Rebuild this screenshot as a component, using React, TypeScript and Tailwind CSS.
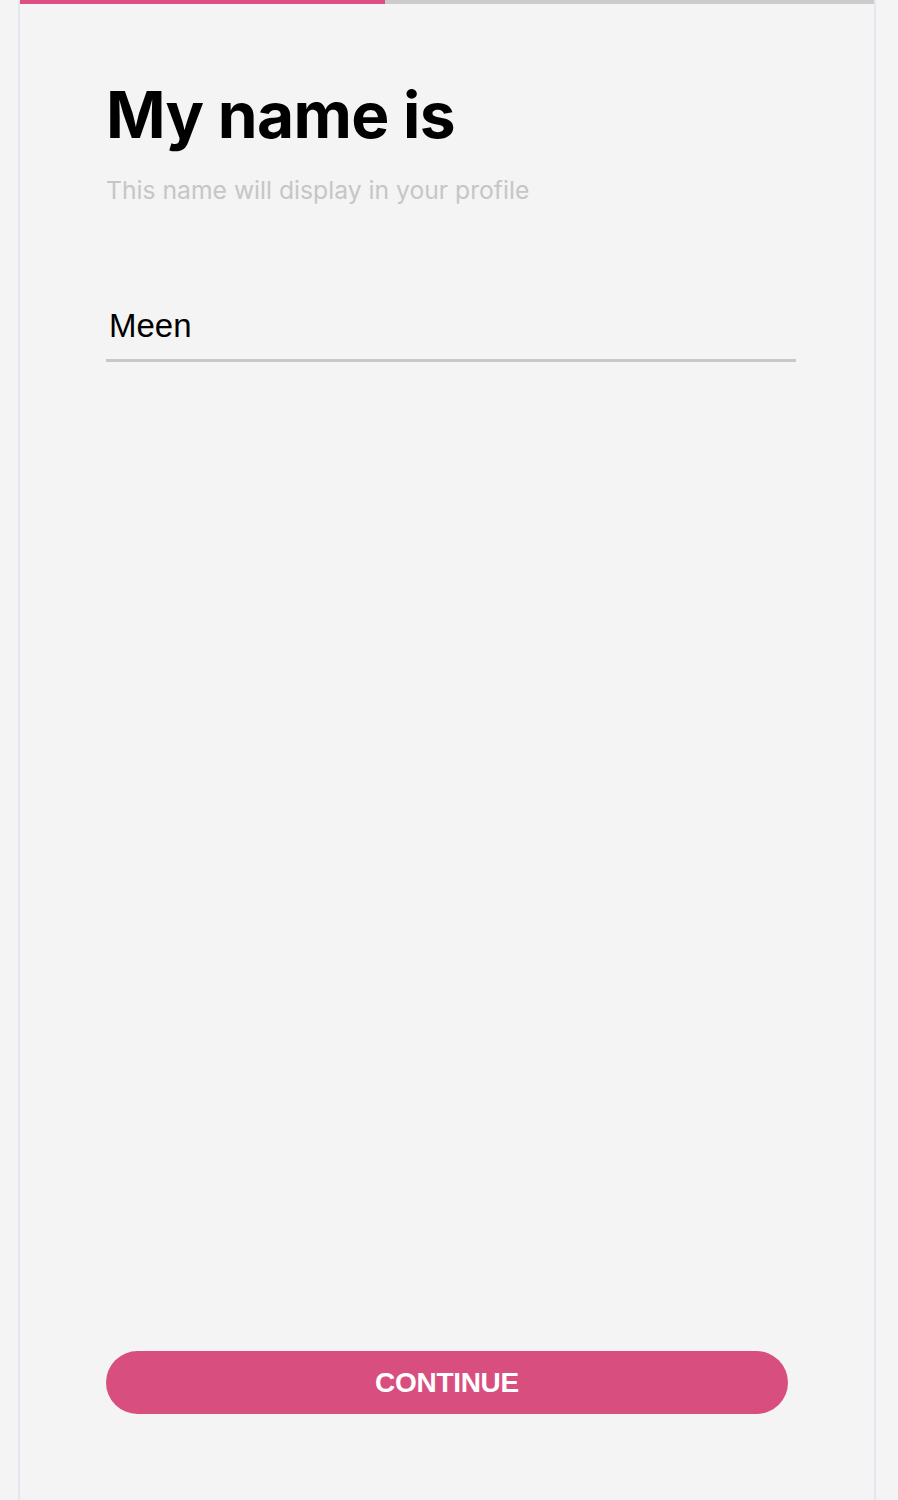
import React from 'react';

// Onboarding step: name entry
export default function App() {
  return (
    <div className="min-h-[1500px] bg-[#f4f4f4]">
      <div className="ml-[18px] w-[858px] min-h-[1500px] border-x-2 border-[#e4e8ee] flex flex-col">
        {/* Progress */}
        <div className="h-[4px] w-full bg-[#cbcbcb] flex">
          <div className="h-full w-[365px] bg-[#dc4f83]" />
        </div>

        <div className="flex-1 flex flex-col px-[86px] pt-[72px] pb-[86px]">
          <h1 className="font-['Inter',sans-serif] font-bold text-[64px] leading-[1.21] text-black tracking-[-0.7px]">
            My name is
          </h1>
          <p className="mt-[23px] font-['Inter',sans-serif] text-[24.7px] leading-[1.21] text-[#c6c6c6]">
            This name will display in your profile
          </p>

          <div className="mt-[101px] w-[690px] border-b-[3px] border-[#c8c8c8] pb-[14px]">
            <input
              readOnly
              value="Meen"
              className="block w-full h-[38px] bg-transparent pl-[3px] font-['Liberation_Sans',Arial,sans-serif] text-[33px] leading-[38px] text-black outline-none"
            />
          </div>

          <button className="mt-auto h-[63px] w-full rounded-full bg-[#d84f7f] text-white font-['Liberation_Sans',Arial,sans-serif] font-bold text-[28px] tracking-[-0.3px]">
            CONTINUE
          </button>
        </div>
      </div>
    </div>
  );
}
